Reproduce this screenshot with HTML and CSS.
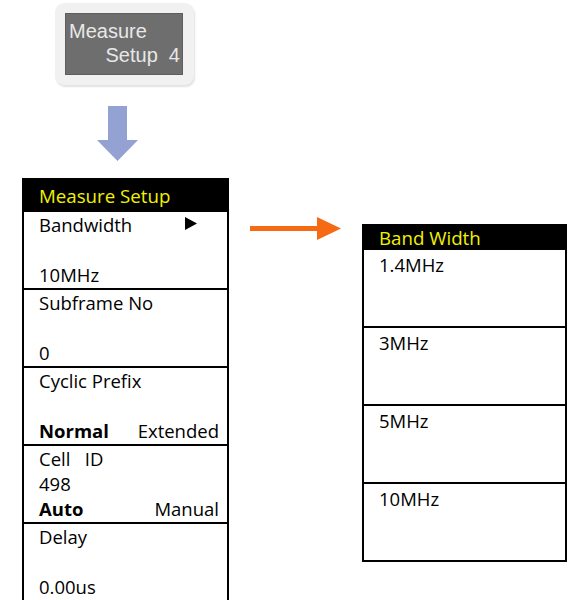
FILE: index.html
```html
<html>
<head>
  <title>Measure Setup</title>
  <link rel="stylesheet" href="styles.css">
</head>
<body>

<!-- кнопка -->
<div class="top">
  <div class="key">
    <div class="key-face">
      <span class="key-line1">Measure</span>
      <span class="key-line2">Setup&nbsp;&nbsp;4</span>
    </div>
  </div>
  <svg class="down" width="42" height="56" viewBox="0 0 42 56">
    <polygon points="11,0 30,0 30,34 41,34 20.5,55 0,34 11,34" fill="#93a2d2"/>
  </svg>
</div>

<!-- меню -->
<div class="menus">
  <div class="panel left">
    <div class="head">Measure Setup</div>
    <div class="item">
      <div class="line split">
        <span>Bandwidth</span>
        <svg class="tri" width="12" height="13" viewBox="0 0 12 13"><polygon points="0,0 12,6.5 0,13" fill="#000"/></svg>
      </div>
      <div class="line"></div>
      <div class="line">10MHz</div>
    </div>
    <div class="item">
      <div class="line">Subframe No</div>
      <div class="line"></div>
      <div class="line">0</div>
    </div>
    <div class="item">
      <div class="line">Cyclic Prefix</div>
      <div class="line"></div>
      <div class="line split"><b>Normal</b><span>Extended</span></div>
    </div>
    <div class="item">
      <div class="line">Cell&nbsp;&nbsp; ID</div>
      <div class="line">498</div>
      <div class="line split"><b>Auto</b><span>Manual</span></div>
    </div>
    <div class="item">
      <div class="line">Delay</div>
      <div class="line"></div>
      <div class="line">0.00us</div>
    </div>
  </div>

  <svg class="right-arrow" width="92" height="24" viewBox="0 0 92 24">
    <polygon points="0,9 67,9 67,0 91,11.5 67,23 67,14 0,14" fill="#f56a12"/>
  </svg>

  <div class="panel right">
    <div class="head">Band Width</div>
    <div class="item"><div class="line">1.4MHz</div></div>
    <div class="item"><div class="line">3MHz</div></div>
    <div class="item"><div class="line">5MHz</div></div>
    <div class="item"><div class="line">10MHz</div></div>
  </div>
</div>

</body>
</html>
```

FILE: styles.css
```css
body {
  margin: 0;
  padding: 0;
  background-color: #fff;
  font-family: "Open Sans", sans-serif;
  font-size: 18.5px;
  color: #000;
}

/* кнопка сверху */
.top {
  padding: 3px 0 0 55px;
}

.key {
  width: 139px;
  height: 82px;
  box-sizing: border-box;
  padding: 10px 11px 12px 10px;
  background-color: #f1f1f1;
  border-radius: 9px;
  box-shadow: 1px 2px 2px #e2e2e2;
}

.key-face {
  height: 60px;
  background-color: #6e6e6e;
  border: 1px solid #5e5e5e;
  font-family: "Liberation Sans", Arial, sans-serif;
  font-size: 20px;
  color: #e8e8e8;
  display: flex;
  flex-direction: column;
}

.key-line1 {
  padding: 6px 0 0 3px;
  line-height: 22px;
}

.key-line2 {
  align-self: flex-end;
  padding-right: 2px;
  line-height: 26px;
}

.down {
  display: block;
  margin: 21px 0 0 42px;
}

/* меню */
.menus {
  display: flex;
  align-items: flex-start;
  margin-top: 16px;
  padding-left: 22px;
}

.panel {
  border: 2px solid #000;
  border-bottom: 0;
  background-color: #fff;
}

.panel.left {
  width: 203px;
  height: 430px;
}

.panel.right {
  width: 201px;
  margin-top: 46px;
  border-bottom: 2px solid #000;
}

.head {
  background-color: #000;
  color: #f2f200;
  padding-left: 15px;
  font-size: 18.7px;
}

.left .head {
  height: 30px;
  line-height: 32px;
}

.right .head {
  height: 22px;
  line-height: 23px;
}

.item {
  border-top: 2px solid #000;
  height: 76px;
  padding: 0 8px 0 15px;
}

.right .item {
  padding-top: 2px;
  height: 74px;
}

.line {
  height: 25px;
  line-height: 25px;
}

.split {
  display: flex;
  justify-content: space-between;
  align-items: center;
}

.tri {
  margin-right: 22px;
  margin-top: -2px;
}

.right-arrow {
  margin: 39px 20px 0 21px;
}
```
